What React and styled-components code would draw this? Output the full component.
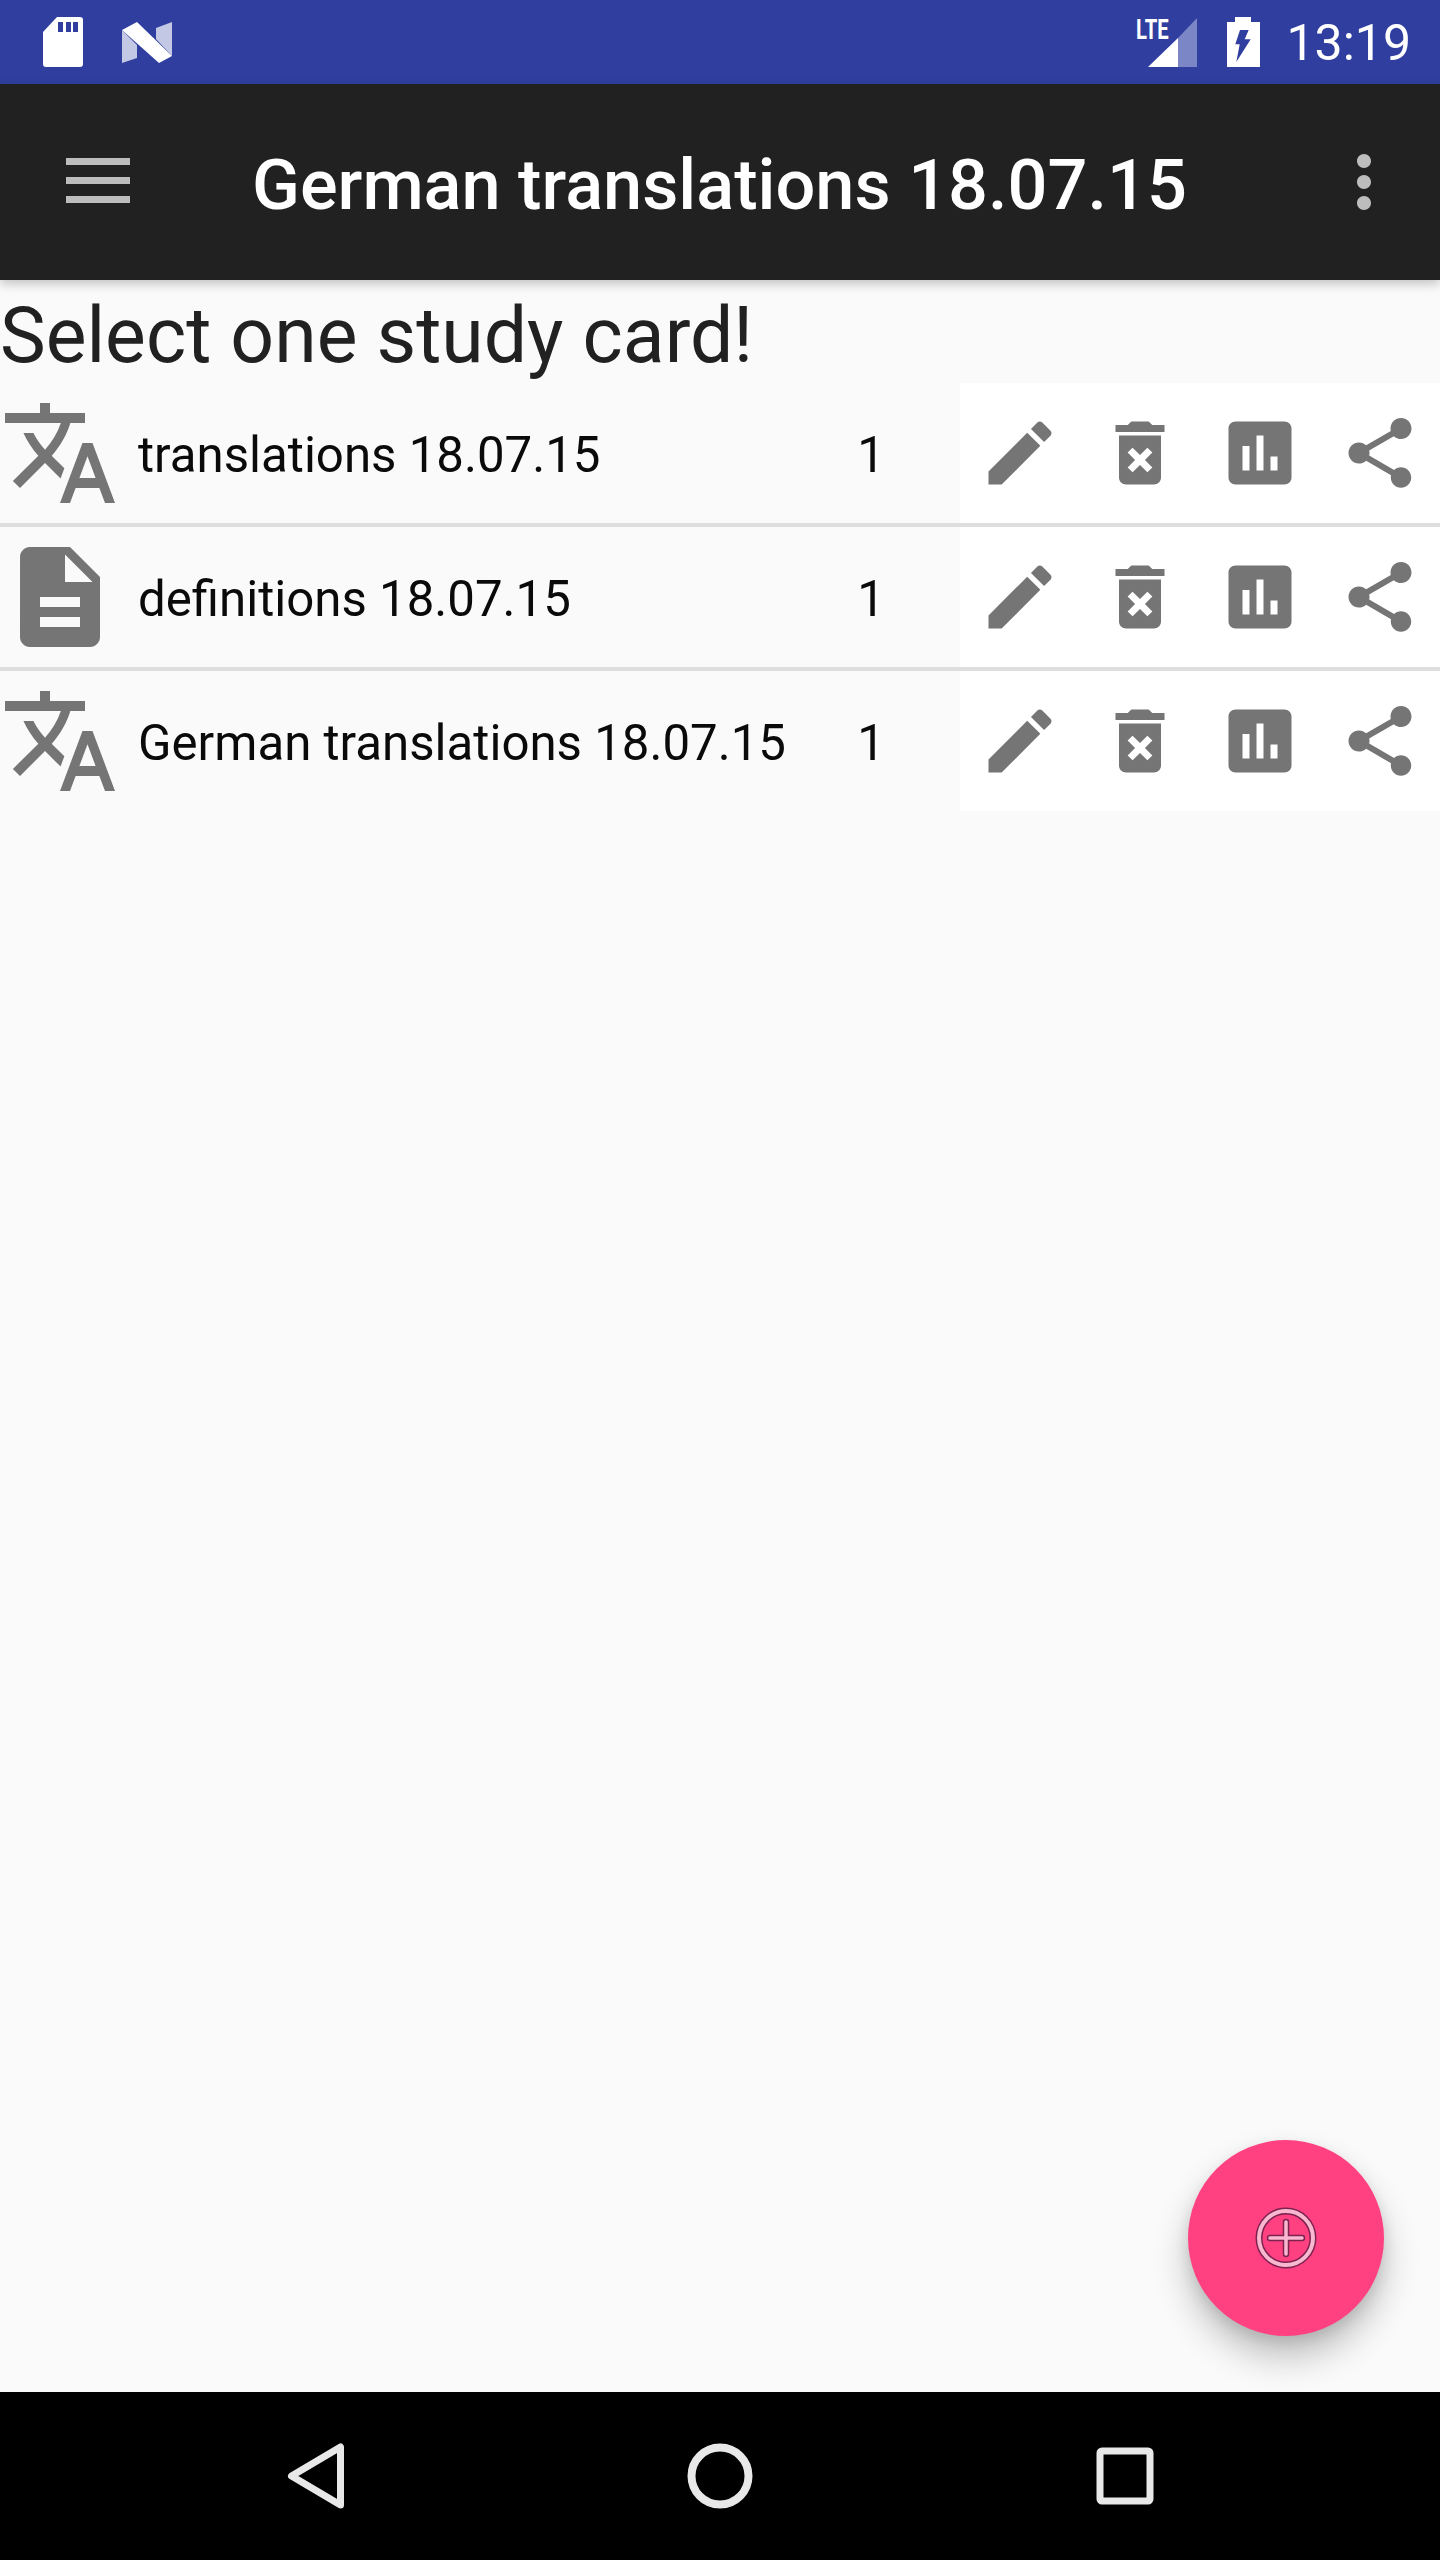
import React from 'react';
import styled, { createGlobalStyle } from 'styled-components';

const GlobalStyle = createGlobalStyle`
	html, body {
		margin: 0;
		padding: 0;
		background: #fafafa;
		font-family: Roboto, "Liberation Sans", sans-serif;
	}
`;

const Page = styled.div`
	width: 1440px;
	height: 2560px;
	display: flex;
	flex-direction: column;
	overflow: hidden;
	background: #fafafa;
`;

const StatusBar = styled.div`
	height: 84px;
	flex: none;
	display: flex;
	align-items: center;
	background: #303f9f;
	color: #fff;
	padding: 0 29px 0 43px;
`;

const StatusSpacer = styled.div`
	flex: 1;
`;

const NotifIcon = styled.svg`
	display: block;
	flex: none;
	margin-right: ${p => p.$gap || 0}px;
`;

const SignalGroup = styled.div`
	position: relative;
	width: 61px;
	height: 49px;
	margin-right: 30px;
`;

const SignalBars = styled.svg`
	display: block;
`;

const LteLabel = styled.span`
	position: absolute;
	left: 0;
	top: 0;
	font-size: 27px;
	line-height: 24px;
	font-weight: 700;
	transform: scaleX(0.75);
	transform-origin: left top;
`;

const Clock = styled.span`
	font-size: 50px;
	line-height: 84px;
	margin-left: 26px;
	padding-top: 2px;
`;

const AppBar = styled.div`
	height: 196px;
	flex: none;
	display: flex;
	align-items: center;
	background: #212121;
	color: #fff;
	box-shadow: 0 4px 10px rgba(0, 0, 0, 0.22);
	position: relative;
	z-index: 1;
	padding: 0 34px 0 56px;
`;

const BarIcon = styled.svg`
	display: block;
	flex: none;
	fill: #bdbdbd;
`;

const Title = styled.div`
	flex: 1;
	margin-left: 112px;
	padding-top: 6px;
	font-size: 70.3px;
	font-weight: 500;
	line-height: 84px;
	white-space: nowrap;
`;

const Content = styled.div`
	flex: 1;
	position: relative;
`;

const Heading = styled.div`
	height: 103px;
	font-size: 76.9px;
	line-height: 113px;
	color: #212121;
	white-space: nowrap;
`;

const List = styled.div`
	display: flex;
	flex-direction: column;
`;

const Row = styled.div`
	display: flex;
	height: 140px;
	border-bottom: ${p => (p.$last ? 'none' : '4px solid #dedede')};
`;

const KindIcon = styled.svg`
	display: block;
	flex: none;
	align-self: center;
	fill: #757575;
`;

const Name = styled.div`
	flex: 1;
	min-width: 0;
	margin-left: 18px;
	font-size: 49.2px;
	line-height: 144px;
	color: #0a0a0a;
	white-space: nowrap;
`;

const Count = styled.div`
	flex: none;
	width: 178px;
	text-align: center;
	font-size: 49.2px;
	line-height: 144px;
	color: #0a0a0a;
`;

const Actions = styled.div`
	flex: none;
	width: 480px;
	display: flex;
	background: #fff;
`;

const ActionButton = styled.div`
	width: 120px;
	display: flex;
	align-items: center;
	justify-content: center;
`;

const ActionIcon = styled.svg`
	display: block;
	fill: #757575;
`;

const Fab = styled.div`
	position: absolute;
	right: 56px;
	bottom: 56px;
	width: 196px;
	height: 196px;
	border-radius: 50%;
	display: flex;
	align-items: center;
	justify-content: center;
	background: #ff4081;
	box-shadow: 0 21px 35px rgba(0, 0, 0, 0.24), 0 6px 14px rgba(0, 0, 0, 0.1);
`;

const NavBar = styled.div`
	height: 168px;
	flex: none;
	display: flex;
	align-items: center;
	justify-content: center;
	gap: 321px;
	background: #000;
`;

const NavIcon = styled.svg`
	display: block;
	fill: none;
	stroke: #e8e8e8;
	stroke-width: 7;
	stroke-linejoin: round;
`;

const PATHS = {
	translate: 'M12.87 15.07l-2.54-2.51.03-.03c1.74-1.94 2.98-4.17 3.71-6.53H17V4h-7V2H8v2H1v1.99h11.17C11.5 7.92 10.44 9.75 9 11.35 8.07 10.32 7.3 9.19 6.69 8h-2c.73 1.63 1.73 3.17 2.98 4.56l-5.09 5.02L4 19l5-5 3.11 3.11.76-2.04zM18.5 10h-2L12 22h2l1.12-3h4.75L21 22h2l-4.5-12zm-2.62 7l1.62-4.33L19.12 17h-3.24z',
	file: 'M14 2H6c-1.1 0-1.99.9-1.99 2L4 20c0 1.1.89 2 1.99 2H18c1.1 0 2-.9 2-2V8l-6-6zm2 16H8v-2h8v2zm0-4H8v-2h8v2zm-3-5V3.5L18.5 9H13z',
	edit: 'M3 17.25V21h3.75L17.81 9.94l-3.75-3.75L3 17.25zM20.71 7.04c.39-.39.39-1.02 0-1.41l-2.34-2.34c-.39-.39-1.02-.39-1.41 0l-1.83 1.83 3.75 3.75 1.83-1.83z',
	trash: 'M6 19c0 1.1.9 2 2 2h8c1.1 0 2-.9 2-2V7H6v12zm2.46-7.12l1.41-1.41L12 12.59l2.12-2.12 1.41 1.41L13.41 14l2.12 2.12-1.41 1.41L12 15.41l-2.12 2.12-1.41-1.41L10.59 14l-2.13-2.12zM15.5 4l-1-1h-5l-1 1H5v2h14V4z',
	stats: 'M19 3H5c-1.1 0-2 .9-2 2v14c0 1.1.9 2 2 2h14c1.1 0 2-.9 2-2V5c0-1.1-.9-2-2-2zM9 17H7v-7h2v7zm4 0h-2V7h2v10zm4 0h-2v-4h2v4z',
	share: 'M18 16.08c-.76 0-1.44.3-1.96.77L8.91 12.7c.05-.23.09-.46.09-.7s-.04-.47-.09-.7l7.05-4.11c.54.5 1.25.81 2.04.81 1.66 0 3-1.34 3-3s-1.34-3-3-3-3 1.34-3 3c0 .24.04.47.09.7L8.04 9.81C7.5 9.31 6.79 9 6 9c-1.66 0-3 1.34-3 3s1.34 3 3 3c.79 0 1.5-.31 2.04-.81l7.12 4.16c-.05.21-.08.43-.08.65 0 1.61 1.31 2.92 2.92 2.92 1.61 0 2.92-1.31 2.92-2.92s-1.31-2.92-2.92-2.92z',
	more: 'M12 8c1.1 0 2-.9 2-2s-.9-2-2-2-2 .9-2 2 .9 2 2 2zm0 2c-1.1 0-2 .9-2 2s.9 2 2 2 2-.9 2-2-.9-2-2-2zm0 6c-1.1 0-2 .9-2 2s.9 2 2 2 2-.9 2-2-.9-2-2-2z',
};

const cards = [
	{ id: 1, kind: 'translate', name: 'translations 18.07.15', count: 1 },
	{ id: 2, kind: 'file', name: 'definitions 18.07.15', count: 1 },
	{ id: 3, kind: 'translate', name: 'German translations 18.07.15', count: 1 },
];

function Action({ icon }) {
	return (
		<ActionButton>
			<ActionIcon width="84" height="84" viewBox="0 0 24 24">
				<path d={PATHS[icon]} />
			</ActionIcon>
		</ActionButton>
	);
}

function CardRow({ card, last }) {
	return (
		<Row $last={last}>
			<KindIcon width="120" height="120" viewBox="0 0 24 24">
				<path d={PATHS[card.kind]} />
			</KindIcon>
			<Name>{card.name}</Name>
			<Count>{card.count}</Count>
			<Actions>
				<Action icon="edit" />
				<Action icon="trash" />
				<Action icon="stats" />
				<Action icon="share" />
			</Actions>
		</Row>
	);
}

export default function App() {
	return (
		<Page>
			<GlobalStyle />
			<StatusBar>
				<NotifIcon $gap={39} width="40" height="50" viewBox="0 0 40 50">
					<path
						fill="#fff"
						fillRule="evenodd"
						d="M14 0h23a3 3 0 0 1 3 3v44a3 3 0 0 1-3 3H3a3 3 0 0 1-3-3V15zM15 5v10h5V5zm8 0v10h5V5zm7 0v10h5V5z"
					/>
				</NotifIcon>
				<NotifIcon width="50" height="41" viewBox="0 0 50 41">
					<path fill="#c3c8e4" d="M0 8l15 15v13L0 41zM50 0v34L34 17V6z" />
					<path fill="#fff" d="M0 8l15-8 35 34-13 7z" />
				</NotifIcon>
				<StatusSpacer />
				<SignalGroup>
					<SignalBars width="61" height="49" viewBox="0 0 61 49">
						<path fill="#7b86c6" d="M42 20L61 0v49H42z" />
						<path fill="#fff" d="M12 49l30-29v29z" />
					</SignalBars>
					<LteLabel>LTE</LteLabel>
				</SignalGroup>
				<NotifIcon width="33" height="50" viewBox="0 0 33 50">
					<path
						fill="#fff"
						fillRule="evenodd"
						d="M8 0h16v5h9v45H0V5h8zM13 13h8.7l-4 9.3h6L9.3 45l3.4-17.7H8.3z"
					/>
				</NotifIcon>
				<Clock>13:19</Clock>
			</StatusBar>
			<AppBar>
				<BarIcon width="84" height="84" viewBox="0 0 84 84">
					<path d="M10 18h64v7H10zM10 37h64v7H10zM10 56h64v7H10z" />
				</BarIcon>
				<Title>German translations 18.07.15</Title>
				<BarIcon width="84" height="84" viewBox="0 0 24 24">
					<path d={PATHS.more} />
				</BarIcon>
			</AppBar>
			<Content>
				<Heading>Select one study card!</Heading>
				<List>
					{cards.map((card, i) => (
						<CardRow key={card.id} card={card} last={i === cards.length - 1} />
					))}
				</List>
				<Fab>
					<svg width="62" height="62" viewBox="0 0 62 62">
						<circle cx="31" cy="31" r="27" fill="none" stroke="#7d2350" strokeWidth="7" />
						<circle cx="31" cy="31" r="27" fill="none" stroke="#f9b8d0" strokeWidth="4" />
						<path d="M31 15v32M15 31h32" stroke="#7d2350" strokeWidth="6.5" strokeLinecap="round" />
						<path d="M31 15v32M15 31h32" stroke="#f9b8d0" strokeWidth="3.5" strokeLinecap="round" />
					</svg>
				</Fab>
			</Content>
			<NavBar>
				<NavIcon width="84" height="84" viewBox="0 0 84 84">
					<path d="M67.5 13v58L18.5 42z" />
				</NavIcon>
				<NavIcon width="84" height="84" viewBox="0 0 84 84">
					<circle cx="42" cy="42" r="28.5" strokeWidth="8" />
				</NavIcon>
				<NavIcon width="84" height="84" viewBox="0 0 84 84">
					<rect x="17" y="17" width="50" height="50" rx="2" />
				</NavIcon>
			</NavBar>
		</Page>
	);
}
